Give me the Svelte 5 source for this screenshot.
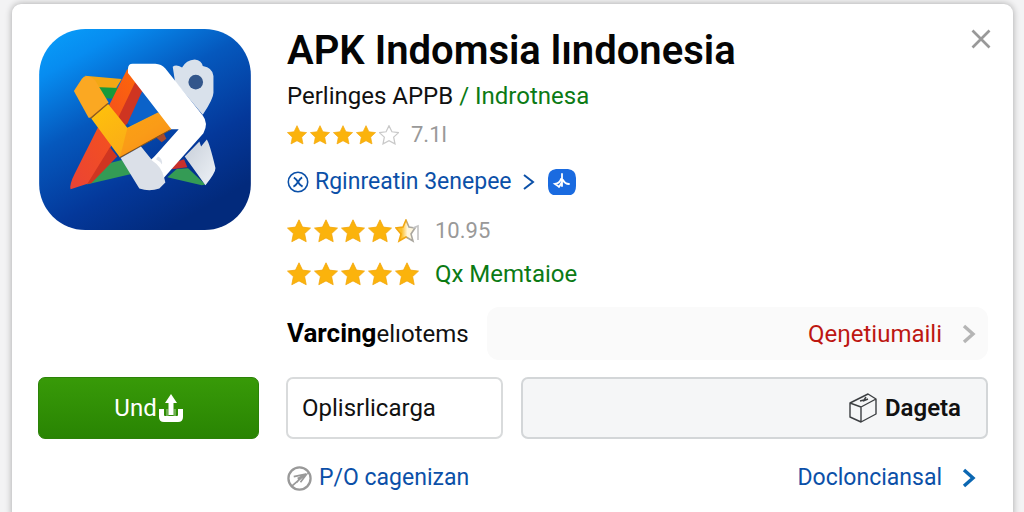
<script>
  const STAR = 'M12 .8l3.500 7.300 8 1-5.900 5.500 1.600 8.100L12 18.900l-7.200 3.800 1.600-8.100L.5 9.100l8-1z';
</script>

{#snippet star(fill)}
  <svg viewBox="0 0 24 24" aria-hidden="true">
    {#if fill === 1}
      <path d={STAR} fill="#fbb30c" stroke="#f3a70d" stroke-width=".8" />
    {:else if fill === 0}
      <path d={STAR} fill="#fff" stroke="#c9c9c9" stroke-width="1.5" />
    {:else}
      <defs>
        <linearGradient id="half">
          <stop offset=".3" stop-color="#fcc02a" />
          <stop offset=".6" stop-color="#fff6dc" />
        </linearGradient>
        <linearGradient id="half-edge">
          <stop offset=".5" stop-color="#f3a70d" />
          <stop offset=".65" stop-color="#aaa79f" />
        </linearGradient>
      </defs>
      <path d="M11 1l3 7 6 1-4 6 2 7-7-4-7 4 2-7-5-6 7-1z" fill="url(#half)" stroke="url(#half-edge)" stroke-width="1.6" />
      <path d="M18 9l5-2v14" fill="none" stroke="#c4c4c4" stroke-width="1.6" />
    {/if}
  </svg>
{/snippet}

{#snippet chevron()}
  <svg class="chevron" viewBox="0 0 14 20" aria-hidden="true">
    <path d="M2 2l9 8-9 8" fill="none" stroke="currentColor" stroke-width="3.400" />
  </svg>
{/snippet}

<main class="card">
  <button class="close" aria-label="Close">
    <svg viewBox="0 0 20 20" aria-hidden="true">
      <path d="M1.500 1.500l17 17M18.500 1.500l-17 17" stroke="#999" stroke-width="2.700" />
    </svg>
  </button>

  <svg class="logo" viewBox="28 26 634 602" role="img" aria-label="App icon">
    <defs>
      <linearGradient id="sky" x1="0" y1="0" x2=".6" y2="1">
        <stop offset="0" stop-color="#08a0fb" />
        <stop offset=".18" stop-color="#078cf0" />
        <stop offset=".45" stop-color="#0558bd" />
        <stop offset=".75" stop-color="#04389a" />
        <stop offset="1" stop-color="#022a7c" />
      </linearGradient>
      <linearGradient id="gold" x1="0" y1="0" x2="1" y2="1">
        <stop offset="0" stop-color="#ffc30a" />
        <stop offset=".6" stop-color="#fbae16" />
        <stop offset="1" stop-color="#f58a1a" />
      </linearGradient>
      <linearGradient id="rust" x1="1" y1="0" x2="0" y2="1">
        <stop offset="0" stop-color="#ff6a05" />
        <stop offset=".45" stop-color="#f4511e" />
        <stop offset="1" stop-color="#ea4335" />
      </linearGradient>
      <linearGradient id="silver" x1="0" y1="0" x2="1" y2="1">
        <stop offset="0" stop-color="#c7ced8" />
        <stop offset="1" stop-color="#eef2f7" />
      </linearGradient>
    </defs>
    <rect x="28" y="26" width="634" height="602" rx="138" fill="url(#sky)" />
    <path d="M335 205L395 290 310 325 290 305z" fill="#0b62c9" />
    <path d="M165 166L275 176 257 206 190 201z" fill="#f2a714" />
    <path d="M195 200L267 203 247 235 215 232z" fill="#169a3b" />
    <path d="M222 432L276 418 304 460 170 492z" fill="#349b55" />
    <path d="M412 470L440 445 474 443 526 492 515 494z" fill="#349b55" />
    <path d="M436 425L462 416 472 440 425 446z" fill="#c8302c" />
    <path d="M372 345L397 330 409 355 395 365z" fill="#a94a2c" />
    <path d="M428 139Q438 131 456 141 468 119 494 117 516 120 518 137 548 142 550 167V217Q550 235 518 283L435 184z" fill="#d9e1eb" />
    <circle cx="497" cy="185" r="22" fill="#33568b" />
    <path d="M464 408L508 363 513 378 530 357Q538 367 556 442 557 455 526 494z" fill="url(#silver)" />
    <path d="M292 146L340 200 184 486 122 506Q118 492 134 460z" fill="url(#rust)" />
    <path d="M340 205L292 310 268 330 258 306 318 180zM240 380L262 408 184 488 172 490z" fill="#cf3521" />
    <path d="M132 212L156 175Q162 166 172 167 186 169 196 180L236 246 184 292 176 292z" fill="#fba822" />
    <path d="M184 294L234 250 292 322 384 276Q406 288 424 326L270 411z" fill="url(#gold)" />
    <path d="M292 324L384 276Q406 288 424 326L270 411z" fill="#fa8a18" fill-opacity=".5" />
    <path d="M182 293L234 249" stroke="#9a5b16" stroke-width="4" />
    <path d="M270 411L420 328" stroke="#80521d" stroke-width="3" />
    <path d="M272 412L333 378 364 416 385 400 406 486 388 504Q358 514 328 504z" fill="#dbe0e8" />
    <path d="M294 146Q294 130 308 130H376Q394 131 406 144L518 285Q536 308 520 338L401 472Q398 440 364 418L446 326H424L294 158z" fill="#fff" />
    <path d="M384 408Q398 414 396 432 390 422 378 416z" fill="#dde2ea" />
  </svg>

  <section class="details">
    <h1>APK Indomsia lındonesia</h1>
    <p class="subtitle">Perlinges APPB <a href="#publisher">/ Indrotnesa</a></p>
    <div class="rating small">
      <span class="stars">{@render star(1)}{@render star(1)}{@render star(1)}{@render star(1)}{@render star(0)}</span>
      <span class="score">7.1l</span>
    </div>
    <div class="feature">
      <a href="#registration">
        <svg class="ring" viewBox="0 0 24 24" fill="none" stroke="currentColor" aria-hidden="true">
          <circle cx="12" cy="12" r="10.600" stroke-width="1.700" />
          <path d="M7.500 7q3 2 4.500 5t5 5M16.500 7q-2 1-4.500 5T7 17" stroke-width="2" />
        </svg>
        <span>Rginreatin 3enepee</span>
        <svg class="thin" viewBox="0 0 12 18" aria-hidden="true">
          <path d="M1 2l9 7-9 7" fill="none" stroke="currentColor" stroke-width="2" />
        </svg>
      </a>
      <svg class="badge" viewBox="0 0 30 28" aria-hidden="true">
        <path d="M9 1h12q8 1 8 9v8q0 7-5 9H6q-5-2-5-9v-8q0-8 8-9z" fill="#1a6be0" />
        <path d="M15 6v12M14 11q-1 4-6 5l3 2M16 12q2 4 6 4M15 14l-3 5" fill="none" stroke="#fff" stroke-width="1.800" stroke-linecap="round" />
      </svg>
    </div>
    <div class="rating middle">
      <span class="stars">{@render star(1)}{@render star(1)}{@render star(1)}{@render star(1)}{@render star(0.5)}</span>
      <span class="score">10.95</span>
    </div>
    <div class="rating last">
      <span class="stars">{@render star(1)}{@render star(1)}{@render star(1)}{@render star(1)}{@render star(1)}</span>
      <a class="green" href="#members">Qx Memtaioe</a>
    </div>
  </section>

  <section class="notice">
    <p><strong>Varcing</strong>elıotems</p>
    <a class="banner" href="#notice">Qeŋetiumaili {@render chevron()}</a>
  </section>

  <button class="primary">
    Und
    <svg viewBox="0 0 24 28" fill="#fff" aria-hidden="true">
      <path d="M12 0l6 9h-3.500v12h-5V9H6z" />
      <path d="M0 15h5v6q0 1 1 1h12q1 0 1-1v-6h5v8q0 5-5 5H5q-5 0-5-5z" />
      <path d="M7 15h2.500v7H7zM14.500 15H17v7h-2.500z" fill-opacity=".3" />
    </svg>
  </button>
  <div class="actions">
    <button class="plain">Oplisrlicarga</button>
    <button class="package">
      <svg viewBox="0 0 28 30" fill="none" stroke="#3c3f42" stroke-width="1.400" stroke-linejoin="round" aria-hidden="true">
        <path d="M1 10L19 1l8 5v15l-15 8-11-5zM1 10l11 4 15-8M12 14v15" />
        <path d="M11 8l4-1 2-3M14 8l5-2" />
      </svg>
      Dageta
    </button>
  </div>

  <footer>
    <a href="#organization">
      <svg class="compass" viewBox="0 0 26 26" fill="none" stroke="#999" aria-hidden="true">
        <circle cx="13" cy="13" r="11.500" stroke-width="2.400" />
        <path d="M5 21L20 8M7 11l10-2-7 8M11 13l9-4-6 8" stroke-width="1.800" />
      </svg>
      P/O cagenizan
    </a>
    <a class="more" href="#documents">Doclonciansal {@render chevron()}</a>
  </footer>
</main>

<style>
  :global(body) {
    margin: 0;
    background: #f3f3f4;
    overflow: hidden;
  }
  .card {
    box-sizing: border-box;
    position: relative;
    display: grid;
    grid-template-columns: 221px 1fr;
    column-gap: 27px;
    align-content: start;
    margin: 4px 11px 0 12px;
    min-height: calc(100vh - 4px);
    padding: 23px 25px 0 26px;
    border-radius: 9px 9px 0 0;
    background: #fff;
    box-shadow: 0 0 7px rgba(0, 0, 0, 0.32);
    color: #111;
    font: 24px/32px Roboto, sans-serif;
  }
  a {
    color: #0b50a8;
    text-decoration: none;
  }
  button {
    font: inherit;
    color: inherit;
    cursor: pointer;
  }
  svg {
    display: block;
    flex: none;
  }
  h1,
  p {
    margin: 0;
  }
  .close {
    position: absolute;
    top: 25px;
    right: 22px;
    padding: 0;
    border: 0;
    background: none;
  }
  .close svg {
    width: 20px;
    height: 20px;
  }
  .logo {
    width: 212px;
    height: 201px;
    margin: 2px 0 0 1px;
  }
  .details {
    padding-left: 1px;
  }
  h1 {
    font-size: 40px;
    line-height: 48px;
    font-weight: 600;
    color: #050505;
    white-space: nowrap;
  }
  .subtitle {
    line-height: 42px;
  }
  .subtitle a,
  .green {
    color: #0b7a14;
  }
  .rating,
  .feature,
  .feature a,
  .stars {
    display: flex;
    align-items: center;
  }
  .score {
    color: #999;
    font-size: 22px;
  }
  .rating {
    gap: 16px;
  }
  .stars {
    gap: 3px;
  }
  .stars svg {
    width: 24px;
    height: 24px;
  }
  .small {
    height: 35px;
    gap: 12px;
  }
  .small .stars svg {
    width: 20px;
    height: 20px;
  }
  .feature {
    height: 60px;
    gap: 12px;
    font-size: 23px;
  }
  .feature a {
    gap: 6px;
  }
  .ring {
    width: 22px;
    height: 22px;
  }
  .thin {
    width: 12px;
    height: 18px;
    margin-left: 5px;
  }
  .badge {
    width: 30px;
    height: 28px;
  }
  .middle {
    height: 38px;
  }
  .last {
    height: 48px;
  }
  .notice {
    grid-column: 2;
    display: flex;
    align-items: center;
    gap: 18px;
    margin-top: 9px;
    padding-left: 1px;
  }
  .notice strong {
    color: #000;
    font-size: 26px;
    font-weight: 700;
  }
  .banner {
    flex: 1;
    display: flex;
    align-items: center;
    justify-content: flex-end;
    gap: 20px;
    box-sizing: border-box;
    height: 53px;
    padding-right: 12px;
    border-radius: 12px;
    background: #fafafa;
    color: #bd1712;
  }
  .chevron {
    width: 14px;
    height: 20px;
  }
  .banner .chevron {
    color: #b5b5b5;
  }
  .primary,
  .plain,
  .package {
    box-sizing: border-box;
    height: 62px;
    border-radius: 7px;
  }
  .primary {
    display: flex;
    align-items: center;
    justify-content: center;
    gap: 2px;
    margin-top: 17px;
    border: 1px solid #2b8208;
    background: linear-gradient(#389a08, #298403);
    color: #fff;
  }
  .primary svg {
    width: 24px;
    height: 28px;
  }
  .actions {
    display: grid;
    grid-template-columns: 217px 1fr;
    gap: 18px;
    margin-top: 17px;
  }
  .plain {
    padding: 0 14px;
    border: 2px solid #d9dbdc;
    background: #fff;
    text-align: left;
  }
  .package {
    display: flex;
    align-items: center;
    justify-content: flex-end;
    gap: 8px;
    padding: 0 25px;
    border: 2px solid #d3d6d8;
    background: #f5f6f7;
    font-weight: 600;
  }
  .package svg {
    width: 28px;
    height: 30px;
  }
  footer {
    grid-column: 2;
    display: flex;
    align-items: center;
    justify-content: space-between;
    height: 78px;
    padding: 0 12px 0 1px;
    font-size: 23px;
  }
  footer a {
    display: flex;
    align-items: center;
    gap: 7px;
  }
  footer .more {
    gap: 20px;
  }
  .more .chevron {
    color: #0b67b2;
  }
  .compass {
    width: 25px;
    height: 25px;
  }
</style>
